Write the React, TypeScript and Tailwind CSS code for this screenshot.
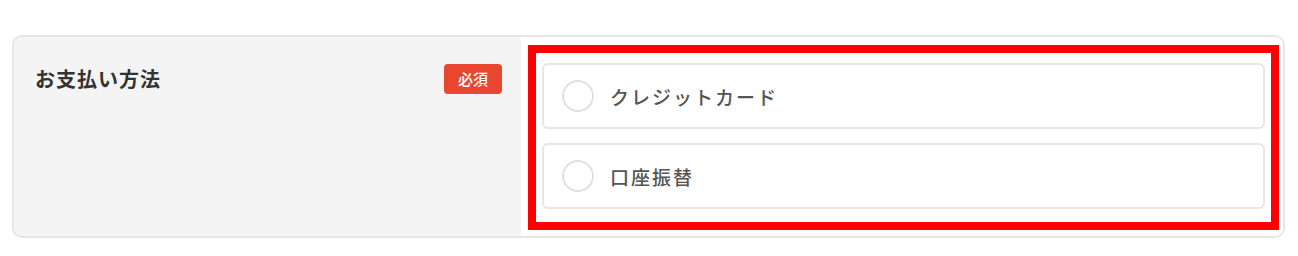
const font = { fontFamily: '"Noto Sans CJK JP", "Noto Sans", sans-serif' };

const options = ["クレジットカード", "口座振替"];

function RadioOption({ label }: { label: string }) {
  return (
    <label className="flex h-[66px] items-center rounded-[6px] border-2 border-[#e4e7ea] bg-white pl-[18px]">
      <span className="size-[32px] shrink-0 rounded-full border-2 border-[#e0e0e0] bg-white" />
      <span className="ml-[16px] text-[19px] font-medium leading-none tracking-[2px] text-[#555]">{label}</span>
    </label>
  );
}

export default function App() {
  return (
    <div className="h-[256px] bg-white px-[12px] pt-[35px]" style={font}>
      <div className="flex h-[203px] w-[1273px] overflow-hidden rounded-[10px] border-2 border-[#e6e6e6]">
        <div className="flex w-[507px] shrink-0 items-start justify-between bg-[#f4f4f4] pl-[21px] pr-[19px] pt-[27px]">
          <h3 className="mt-[1px] text-[20px] font-bold leading-[28px] tracking-[1px] text-[#333]">お支払い方法</h3>
          <span className="flex h-[30px] w-[58px] items-center justify-center rounded-[4px] bg-[#e8462f] text-[15px] font-medium text-white">
            必須
          </span>
        </div>
        <div className="flex-1 bg-white pb-[6px] pl-[7px] pr-[4px] pt-[8px]">
          <div className="flex h-full flex-col gap-[14px] border-8 border-[#ff0000] px-[6px] pb-[11px] pt-[10px]">
            {options.map((o) => (
              <RadioOption key={o} label={o} />
            ))}
          </div>
        </div>
      </div>
    </div>
  );
}
